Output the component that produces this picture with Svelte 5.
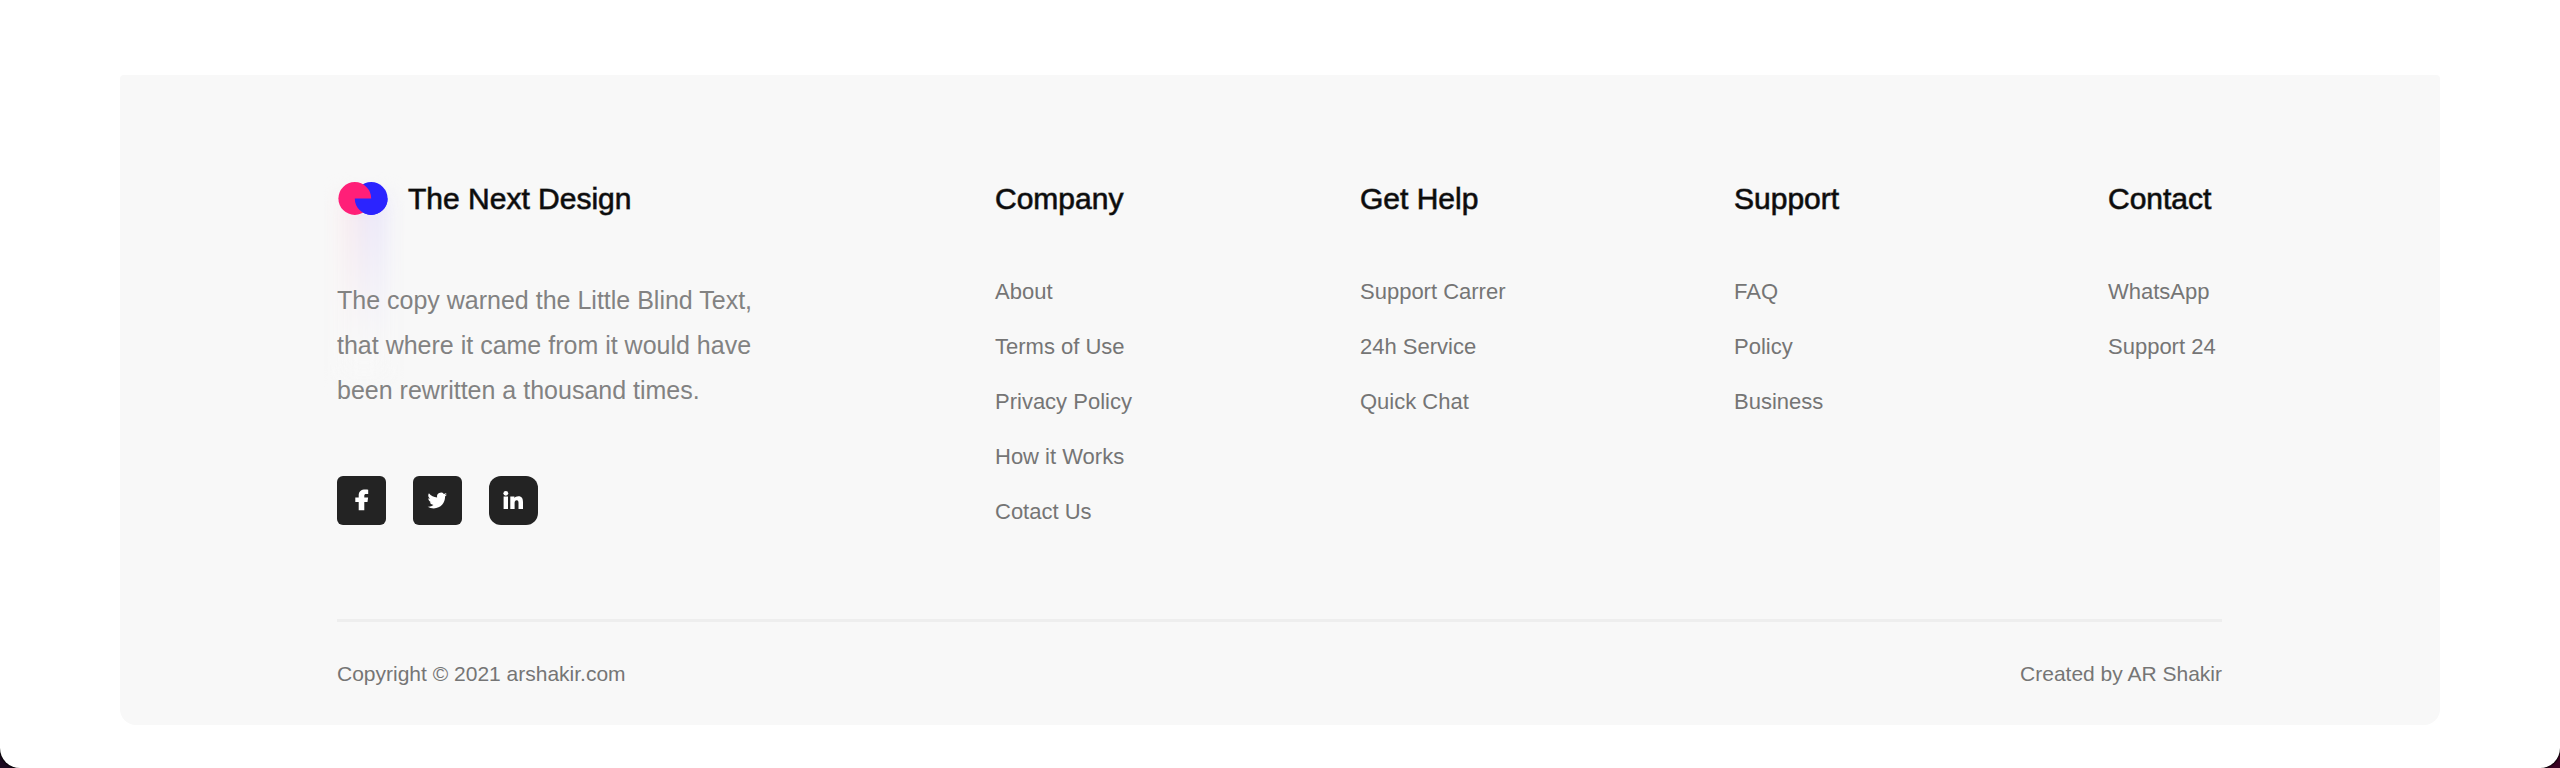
<script>
  const columns = [
    { title: 'Company', links: ['About', 'Terms of Use', 'Privacy Policy', 'How it Works', 'Cotact Us'] },
    { title: 'Get Help', links: ['Support Carrer', '24h Service', 'Quick Chat'] },
    { title: 'Support', links: ['FAQ', 'Policy', 'Business'] },
    { title: 'Contact', links: ['WhatsApp', 'Support 24'] }
  ];
</script>

<div class="page">
  <footer class="card">
    <div class="columns">
      <section class="about">
        <div class="brand">
          <span class="mark">
            <span class="glow"></span>
            <svg class="logo" viewBox="0 0 51 34" aria-hidden="true">
              <circle cx="34.2" cy="16.5" r="16.4" fill="#2b24ff" />
              <circle cx="17.8" cy="16.5" r="16.4" fill="#ff1f78" />
              <path d="M17.8 16.5a16.4 16.4 0 0 0 32.8 0z" fill="#2b24ff" />
            </svg>
          </span>
          <h2>The Next Design</h2>
        </div>
        <p class="blurb">
          The copy warned the Little Blind Text,<br />
          that where it came from it would have<br />
          been rewritten a thousand times.
        </p>
        <div class="social">
          <a href="#facebook" aria-label="Facebook">
            <svg viewBox="0 0 49 49">
              <path d="M21.7 34.3h5.6v-8.2h3.2l.6-4.7h-3.8v-1.8c0-1.2.5-1.7 1.9-1.7h2v-4.2c-.6-.1-1.7-.3-2.9-.3-4.1 0-6.6 2-6.6 5.9v2.1h-3.4v4.7h3.4z" />
            </svg>
          </a>
          <a href="#twitter" aria-label="Twitter">
            <svg viewBox="0 0 49 49">
              <path transform="translate(14.6 14.8) scale(.81)" d="M23.95 4.57a10 10 0 0 1-2.82.77 4.96 4.96 0 0 0 2.16-2.72c-.95.55-2 .95-3.13 1.18a4.92 4.92 0 0 0-8.38 4.48C7.69 8.1 4.07 6.13 1.64 3.16a4.92 4.92 0 0 0 1.52 6.57 4.9 4.9 0 0 1-2.23-.61v.06a4.92 4.92 0 0 0 3.95 4.83 5 5 0 0 1-2.21.08 4.94 4.94 0 0 0 4.6 3.42A9.87 9.87 0 0 1 0 19.54a13.99 13.99 0 0 0 7.55 2.21c9.05 0 14-7.5 14-13.98 0-.21 0-.42-.02-.63a9.94 9.94 0 0 0 2.46-2.55z" />
            </svg>
          </a>
          <a class="soft" href="#linkedin" aria-label="LinkedIn">
            <svg viewBox="0 0 49 49">
              <circle cx="16.8" cy="17.3" r="2.4" />
              <path d="M14.6 20.6h4.4v12.3h-4.4zM21.3 20.6h4.1v1.5c.7-1.1 2.1-1.8 3.9-1.8 3.8 0 4.7 2.6 4.7 6v6.6h-4.5v-5.6c0-1.6-.1-3-1.8-3s-2.1 1.4-2.1 3v5.6h-4.3z" />
            </svg>
          </a>
        </div>
      </section>

      {#each columns as column}
        <nav aria-label={column.title}>
          <h2>{column.title}</h2>
          <ul>
            {#each column.links as link}
              <li><a href="#top">{link}</a></li>
            {/each}
          </ul>
        </nav>
      {/each}
    </div>

    <div class="legal">
      <span>Copyright © 2021 arshakir.com</span>
      <span>Created by AR Shakir</span>
    </div>
  </footer>
</div>

<style>
  :global(body) {
    background: linear-gradient(90deg, #1c0a20, #3c0424);
  }

  .page {
    box-sizing: border-box;
    min-height: 100vh;
    padding: 75px 120px 43px;
    background: #fff;
    border-radius: 0 0 20px 20px;
    box-shadow: 0 0 2px 1px #000;
    font-family: "Liberation Sans", Arial, sans-serif;
    overflow: hidden;
  }

  .card {
    padding: 107px 218px 39px 217px;
    background: #f8f8f8;
    border-radius: 4px 4px 16px 16px;
  }

  .columns {
    display: grid;
    grid-template-columns: 658fr 365fr 374fr 374fr 114fr;
    padding-bottom: 80px;
  }

  h2 {
    margin: 0;
    color: #0c0c0c;
    font-size: 30px;
    font-weight: 400;
    line-height: 34px;
    white-space: nowrap;
    -webkit-text-stroke: 1px rgba(12, 12, 12, 0.65);
  }

  .brand {
    display: flex;
    gap: 20px;
  }

  .mark {
    position: relative;
    display: block;
    width: 51px;
    height: 34px;
  }

  .logo {
    position: relative;
    display: block;
    width: 51px;
    height: 34px;
  }

  /* Soft coloured shadow that falls below the logo */
  .glow {
    position: absolute;
    top: 14px;
    left: 4px;
    width: 46px;
    height: 180px;
    background:
      linear-gradient(180deg, rgba(248, 248, 248, 0), #f8f8f8 85%),
      linear-gradient(90deg, #fceaea, #e8e5fa 75%);
    filter: blur(10px);
  }

  .blurb {
    position: relative;
    margin: 62px 0 0;
    color: #828282;
    font-size: 25px;
    line-height: 45px;
  }

  .social {
    display: flex;
    gap: 27px;
    margin-top: 63px;
  }

  .social a {
    width: 49px;
    height: 49px;
    background: #232323;
    border-radius: 6px;
  }

  .social .soft {
    border-radius: 12px;
  }

  .social svg {
    display: block;
    fill: #fff;
  }

  ul {
    margin: 48px 0 0;
    padding: 0;
    list-style: none;
  }

  li {
    font-size: 22px;
    line-height: 55px;
    white-space: nowrap;
  }

  li a {
    color: #757575;
    text-decoration: none;
  }

  .legal {
    display: flex;
    justify-content: space-between;
    padding-top: 40px;
    border-top: 3px solid #eee;
    color: #757575;
    font-size: 21px;
    line-height: 24px;
  }
</style>
